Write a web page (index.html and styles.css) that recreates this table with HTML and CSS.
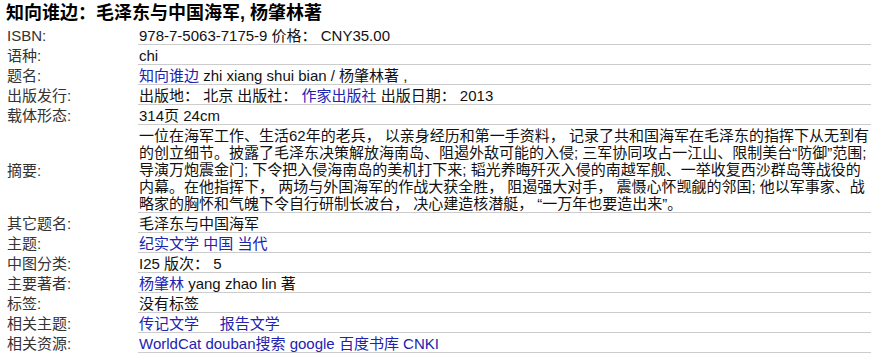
FILE: index.html
```html
<!DOCTYPE html>
<html lang="zh-CN">
<head>
<meta charset="utf-8">
<title>知向谁边：毛泽东与中国海军</title>
<link rel="stylesheet" href="styles.css">
</head>
<body>
<div class="page">
  <h1 class="title">知向谁边：毛泽东与中国海军, 杨肇林著</h1>
  <div class="record">
    <div class="label">ISBN:</div>
    <div class="value">978-7-5063-7175-9 价格： CNY35.00</div>

    <div class="label">语种:</div>
    <div class="value">chi</div>

    <div class="label">题名:</div>
    <div class="value"><a href="#">知向谁边</a> zhi xiang shui bian / 杨肇林著 ,</div>

    <div class="label">出版发行:</div>
    <div class="value">出版地： 北京 出版社： <a href="#">作家出版社</a> 出版日期： 2013</div>

    <div class="label">载体形态:</div>
    <div class="value">314页 24cm</div>

    <div class="label label-mid">摘要:</div>
    <div class="value">一位在海军工作、生活62年的老兵， 以亲身经历和第一手资料， 记录了共和国海军在毛泽东的指挥下从无到有的创立细节。披露了毛泽东决策解放海南岛、阻遏外敌可能的入侵; 三军协同攻占一江山、限制美台“防御”范围; 导演万炮震金门; 下令把入侵海南岛的美机打下来; 韬光养晦歼灭入侵的南越军舰、一举收复西沙群岛等战役的内幕。在他指挥下， 两场与外国海军的作战大获全胜， 阻遏强大对手， 震慑心怀觊觎的邻国; 他以军事家、战略家的胸怀和气魄下令自行研制长波台， 决心建造核潜艇， “一万年也要造出来”。</div>

    <div class="label">其它题名:</div>
    <div class="value">毛泽东与中国海军</div>

    <div class="label">主题:</div>
    <div class="value"><a href="#">纪实文学</a> <a href="#">中国</a> <a href="#">当代</a></div>

    <div class="label">中图分类:</div>
    <div class="value">I25 版次： 5</div>

    <div class="label">主要著者:</div>
    <div class="value"><a href="#">杨肇林</a> yang zhao lin 著</div>

    <div class="label">标签:</div>
    <div class="value">没有标签</div>

    <div class="label">相关主题:</div>
    <div class="value"><a href="#">传记文学</a>&nbsp;&nbsp;&nbsp;&nbsp; <a href="#">报告文学</a></div>

    <div class="label">相关资源:</div>
    <div class="value"><a href="#">WorldCat</a> <a href="#">douban搜索</a> <a href="#">google</a> <a href="#">百度书库</a> <a href="#">CNKI</a></div>
  </div>
</div>
</body>
</html>
```

FILE: styles.css
```css
html, body {
  margin: 0;
  padding: 0;
  background: #ffffff;
}

body {
  font-family: "Liberation Sans", Arial, "Noto Sans CJK SC", sans-serif;
  font-size: 15px;
  color: #111111;
}

.page {
  padding-left: 6px;
}

.title {
  margin: 0;
  padding-top: 2px;
  font-size: 18px;
  line-height: 23px;
  font-weight: bold;
  color: #000000;
}

.record {
  display: grid;
  grid-template-columns: 132px 1fr;
}

.label {
  padding: 2px 0 0 1px;
  line-height: 17px;
  color: #333333;
}

.label-mid {
  align-self: center;
}

.value {
  padding: 2px 0 0 1px;
  line-height: 17px;
  border-bottom: 1px solid #cccccc;
  color: #111111;
}

.value a {
  color: #2222b0;
  text-decoration: none;
}
```
